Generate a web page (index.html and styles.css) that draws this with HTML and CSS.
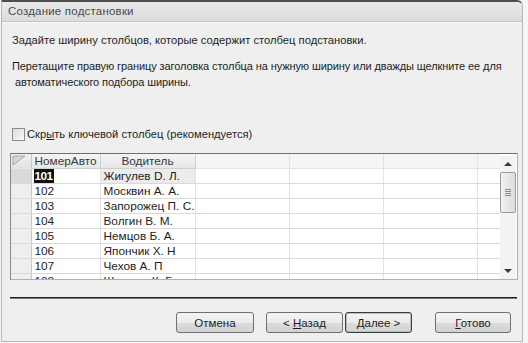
FILE: index.html
```html
<!DOCTYPE html>
<html lang="ru">
<head>
<meta charset="UTF-8">
<title>Создание подстановки</title>
<link rel="stylesheet" href="styles.css">
</head>
<body>
<div class="window">
  <div class="titlebar">Создание подстановки</div>
  <div class="content">
    <p class="lead">Задайте ширину столбцов, которые содержит столбец подстановки.</p>
    <p class="hint">Перетащите правую границу заголовка столбца на нужную ширину или дважды щелкните ее для<br>&nbsp;автоматического подбора ширины.</p>
    <label class="check"><span class="box"></span>Скр<u>ы</u>ть ключевой столбец (рекомендуется)</label>

    <div class="sheet">
      <div class="sheet-body">
        <table class="data">
          <colgroup>
            <col class="c-sel"><col class="c-num"><col class="c-drv"><col class="c-e"><col class="c-e"><col class="c-e"><col>
          </colgroup>
          <thead>
            <tr>
              <th class="sel corner"><svg width="14" height="11" viewBox="0 0 14 11"><polygon points="1,1 13,1 1,10" fill="#d6d6d6" stroke="#a8a8a8" stroke-width="1"/></svg></th>
              <th class="hd">НомерАвто</th>
              <th class="hd">Водитель</th>
              <th></th><th></th><th></th><th class="last"></th>
            </tr>
          </thead>
          <tbody>
            <tr class="current"><td class="sel"></td><td><span class="hl">101</span></td><td class="cur">Жигулев D. Л.</td><td></td><td></td><td></td><td class="last"></td></tr>
            <tr><td class="sel"></td><td>102</td><td>Москвин А. А.</td><td></td><td></td><td></td><td class="last"></td></tr>
            <tr><td class="sel"></td><td>103</td><td>Запорожец П. С.</td><td></td><td></td><td></td><td class="last"></td></tr>
            <tr><td class="sel"></td><td>104</td><td>Волгин В. М.</td><td></td><td></td><td></td><td class="last"></td></tr>
            <tr><td class="sel"></td><td>105</td><td>Немцов Б. А.</td><td></td><td></td><td></td><td class="last"></td></tr>
            <tr><td class="sel"></td><td>106</td><td>Япончик Х. Н</td><td></td><td></td><td></td><td class="last"></td></tr>
            <tr><td class="sel"></td><td>107</td><td>Чехов А. П</td><td></td><td></td><td></td><td class="last"></td></tr>
            <tr><td class="sel"></td><td>108</td><td>Шишков К. Г.</td><td></td><td></td><td></td><td class="last"></td></tr>
          </tbody>
        </table>
      </div>
      <div class="scrollbar">
        <span class="arrow up"></span>
        <span class="thumb"><i></i><i></i><i></i><i></i></span>
        <span class="arrow down"></span>
      </div>
    </div>

    <div class="separator"></div>

    <div class="buttons">
      <button class="btn cancel">Отмена</button>
      <button class="btn back">&lt; <u>Н</u>азад</button>
      <button class="btn next"><u>Д</u>алее &gt;</button>
      <button class="btn done"><u>Г</u>отово</button>
    </div>
  </div>
</div>
</body>
</html>
```

FILE: styles.css
```css
body {
  margin: 0;
  background: #f6f6f6;
  font-family: "Liberation Sans", Arial, sans-serif;
  font-size: 11.2px;
  color: #1e1e1e;
}

.window {
  width: 520px;
  height: 339px;
  margin-left: 1px;
  background: #efefef;
  border: 1px solid #b8b8b8;
  border-top: 2px solid #4e4e4e;
  border-top-right-radius: 6px;
  overflow: hidden;
}

.titlebar {
  height: 19px;
  line-height: 19px;
  padding-left: 6px;
  background: linear-gradient(#e9e9e9, #dcdcdc);
  border-bottom: 1px solid #c4c4c4;
  box-shadow: 0 1px 0 #fafafa;
  color: #4a4a4a;
  font-size: 11.5px;
  letter-spacing: 0.2px;
}

.content {
  padding: 0 4px 0 8px;
}

.lead,
.hint {
  margin: 0 0 0 2px;
  line-height: 16px;
}

.lead {
  margin-top: 10px;
}

.hint {
  margin-top: 10px;
  font-size: 11px;
  letter-spacing: -0.1px;
  white-space: nowrap;
}

.check {
  display: flex;
  align-items: center;
  height: 16px;
  margin: 36px 0 0 2px;
}

.check .box {
  width: 11px;
  height: 11px;
  margin-right: 2px;
  border: 1px solid #8c8c8c;
  background: linear-gradient(135deg, #dcdcdc, #fafafa);
}

/* datasheet */
.sheet {
  display: flex;
  height: 125px;
  margin-top: 11px;
  background: #fff;
  border: 1px solid #b0b0b0;
  border-top: 1px solid #6e6e6e;
  border-left: 1px solid #8a8a8a;
}

.sheet-body {
  flex: 1;
  overflow: hidden;
}

.data {
  border-collapse: collapse;
  table-layout: fixed;
  width: 100%;
}

.c-sel { width: 20px; }
.c-num { width: 69px; }
.c-drv { width: 95px; }
.c-e { width: 94px; }

.data th,
.data td {
  height: 14px;
  padding: 0 3px;
  border-right: 1px solid #e2e2e2;
  border-bottom: 1px solid #dadada;
  line-height: 14px;
  font-size: 11.8px;
  white-space: nowrap;
  overflow: hidden;
  text-align: left;
  font-weight: normal;
}

.data th {
  background: #f5f5f5;
  border-bottom-color: #e4e4e4;
  color: #3a3a3a;
}

.data th.hd {
  text-align: center;
  background: linear-gradient(#f4f4f4, #e6e6e6);
  border-right-color: #cfcfcf;
  border-bottom-color: #cfcfcf;
}

.data .sel {
  padding: 0;
  background: #eeeeee;
  border-right-color: #c8c8c8;
}

.data th.corner {
  vertical-align: top;
  background: linear-gradient(#f0f0f0, #e2e2e2);
}

.data th.corner svg {
  display: block;
  margin: 1px 0 0 1px;
}

.data .current .sel {
  background: #d9d9d9;
}

.data td.cur {
  background: #ececec;
}

.data .last {
  border-right: 0;
}

.hl {
  display: inline-block;
  padding: 0 1px;
  margin-left: -1px;
  background: #111;
  color: #fff;
  font-weight: bold;
  letter-spacing: -0.5px;
}

.scrollbar {
  position: relative;
  width: 16px;
  margin: 2px 1px 0 0;
  background: #f3f3f3;
}

.arrow {
  position: absolute;
  left: 4px;
  width: 0;
  height: 0;
  border-left: 4px solid transparent;
  border-right: 4px solid transparent;
}

.arrow.up {
  top: 6px;
  border-bottom: 4px solid #3a3a3a;
}

.arrow.down {
  bottom: 6px;
  border-top: 4px solid #3a3a3a;
}

.thumb {
  position: absolute;
  top: 16px;
  left: 0;
  width: 14px;
  height: 39px;
  border: 1px solid #9a9a9a;
  border-radius: 2px;
  background: linear-gradient(90deg, #f2f2f2, #dcdcdc);
  display: flex;
  flex-direction: column;
  justify-content: center;
  align-items: center;
  gap: 1px;
}

.thumb i {
  display: block;
  width: 6px;
  height: 1px;
  background: #8a8a8a;
}

.separator {
  height: 1px;
  margin: 17px 1px 0 0;
  background: #1c1c1c;
  box-shadow: 0 1px 0 #7a7a7a;
}

.buttons {
  display: flex;
  justify-content: flex-end;
  margin: 14px 7px 0 0;
}

.btn {
  height: 21px;
  padding: 0;
  border: 1px solid #707070;
  border-radius: 3px;
  background: linear-gradient(#f4f4f4 0%, #ebebeb 50%, #dcdcdc 51%, #d2d2d2 100%);
  font-family: "Liberation Sans", Arial, sans-serif;
  font-size: 11.5px;
  color: #1e1e1e;
}

.cancel { width: 78px; margin-right: 12px; }
.back { width: 77px; margin-right: 2px; }
.next {
  width: 67px;
  margin-right: 23px;
  border-color: #3c3c3c;
  box-shadow: inset 0 0 0 1px #bdbdbd;
}
.done { width: 76px; }
```
